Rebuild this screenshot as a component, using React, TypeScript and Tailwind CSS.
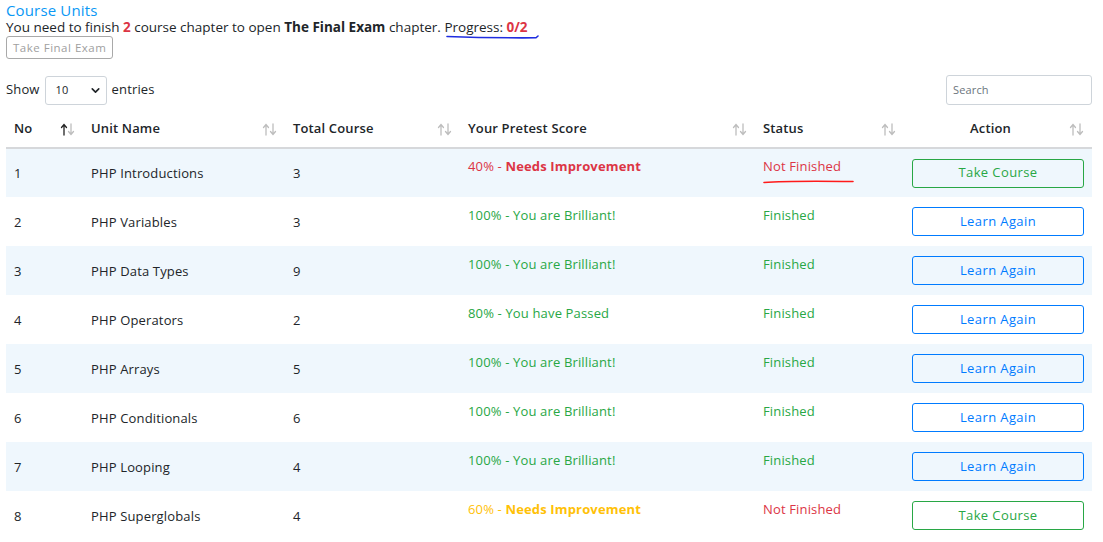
import { ChevronDown } from 'lucide-react'

type Unit = {
  no: number
  name: string
  total: number
  score: number
  finished: boolean
}

const units: Unit[] = [
  { no: 1, name: 'PHP Introductions', total: 3, score: 40, finished: false },
  { no: 2, name: 'PHP Variables', total: 3, score: 100, finished: true },
  { no: 3, name: 'PHP Data Types', total: 9, score: 100, finished: true },
  { no: 4, name: 'PHP Operators', total: 2, score: 80, finished: true },
  { no: 5, name: 'PHP Arrays', total: 5, score: 100, finished: true },
  { no: 6, name: 'PHP Conditionals', total: 6, score: 100, finished: true },
  { no: 7, name: 'PHP Looping', total: 4, score: 100, finished: true },
  { no: 8, name: 'PHP Superglobals', total: 4, score: 60, finished: false },
]

function SortIcon({ active }: { active?: boolean }) {
  return (
    <svg width="15" height="13" viewBox="0 0 15 13" className="shrink-0">
      <g stroke={active ? '#222' : '#bdbdbd'} strokeWidth="1.3" fill="none" strokeLinecap="round">
        <path d="M4 12 V2 M1.5 4.5 L4 1.5 L6.5 4.5" />
      </g>
      <g stroke="#bdbdbd" strokeWidth="1.3" fill="none" strokeLinecap="round">
        <path d="M11 1 V11 M8.5 8.5 L11 11.5 L13.5 8.5" />
      </g>
    </svg>
  )
}

function Score({ score }: { score: number }) {
  if (score === 100) return <span className="text-[#28a745]">100% - You are Brilliant!</span>
  if (score >= 80) return <span className="text-[#28a745]">{score}% - You have Passed</span>
  const color = score >= 50 ? 'text-[#ffc107]' : 'text-[#dc3545]'
  return (
    <span className={color}>
      {score}% - <b className="font-bold">Needs Improvement</b>
    </span>
  )
}

const headers = [
  { label: 'No', w: 'w-[77px]', active: true },
  { label: 'Unit Name', w: 'w-[202px]' },
  { label: 'Total Course', w: 'w-[175px]' },
  { label: 'Your Pretest Score', w: 'w-[295px]' },
  { label: 'Status', w: 'w-[149px]' },
  { label: 'Action', w: 'w-[188px]', center: true },
]

export default function App() {
  return (
    <main className="min-h-screen bg-white px-[6px] text-[#212529] font-['Open_Sans',sans-serif] tracking-[0.15px]">
      <div className="w-[1086px]">
        <h1 className="pt-[1px] text-[15px] leading-[18px] text-[#0a98f5]">Course Units</h1>
        <p className="relative h-[17px] text-[13.5px] leading-[17px] tracking-normal">
          You need to finish <b className="text-[#dc3545]">2</b> course chapter to open <b>The Final Exam</b> chapter.{' '}
          Progress: <b className="text-[#dc3545]">0/2</b>
          <svg className="absolute left-[439px] top-[15px]" width="96" height="6" viewBox="0 0 96 6">
            <path d="M2 2.5 C 30 3.5, 60 4, 91 3.8 L 93 2" stroke="#1f2de0" strokeWidth="1.6" fill="none" strokeLinecap="round" />
          </svg>
        </p>
        <button
          disabled
          className="block h-[23px] rounded-[3px] border border-[#a9a9a9] px-[6px] text-[11.5px] tracking-[0.5px] text-[#a0a0a0]"
        >
          Take Final Exam
        </button>

        <div className="mt-[16px] flex items-center justify-between">
          <label className="flex items-center gap-[5px] text-[13px]">
            Show
            <span className="flex h-[29px] w-[62px] items-center justify-between rounded-[3px] border border-[#ced4da] pl-[10px] pr-[4px] text-[11px]">
              10
              <ChevronDown size={13} strokeWidth={3} />
            </span>
            entries
          </label>
          <div className="flex h-[30px] w-[146px] items-center rounded-[3px] border border-[#ced4da] px-[6px] text-[11px] text-[#6c757d]">
            Search
          </div>
        </div>

        <table className="mt-[10px] w-[1086px] border-collapse text-[13px]">
          <thead>
            <tr className="border-b-2 border-[#d6d8db]">
              {headers.map((h) => (
                <th key={h.label} className={`${h.w} h-[33px] px-[8px] pb-[4px] font-semibold`}>
                  <div className="flex items-center justify-between">
                    <span className={h.center ? 'flex-1 text-center' : ''}>{h.label}</span>
                    <SortIcon active={h.active} />
                  </div>
                </th>
              ))}
            </tr>
          </thead>
          <tbody>
            {units.map((u) => (
              <tr key={u.no} className={`h-[49px] ${u.no % 2 === 1 ? 'bg-[#eff7fd]' : 'bg-white'}`}>
                <td className="px-[8px] pt-[2px]">{u.no}</td>
                <td className="px-[8px] pt-[2px]">{u.name}</td>
                <td className="px-[8px] pt-[2px]">{u.total}</td>
                <td className="px-[8px]">
                  <div className="mb-[12px]">
                    <Score score={u.score} />
                  </div>
                </td>
                <td className="relative px-[8px]">
                  <div className={`mb-[12px] ${u.finished ? 'text-[#28a745]' : 'text-[#dc3545]'}`}>
                    {u.finished ? 'Finished' : 'Not Finished'}
                  </div>
                  {u.no === 1 && (
                    <svg className="absolute left-[8px] top-[30px]" width="92" height="5" viewBox="0 0 92 5">
                      <path d="M1 3.5 C 20 2, 50 2, 90 2.5" stroke="#ff1a1a" strokeWidth="1.6" fill="none" strokeLinecap="round" />
                    </svg>
                  )}
                </td>
                <td className="px-[8px]">
                  <button
                    className={`h-[29px] w-[172px] rounded-[3px] border text-[13px] tracking-[0.4px] ${
                      u.finished ? 'border-[#007bff] text-[#007bff]' : 'border-[#28a745] text-[#28a745]'
                    }`}
                  >
                    {u.finished ? 'Learn Again' : 'Take Course'}
                  </button>
                </td>
              </tr>
            ))}
          </tbody>
        </table>
      </div>
    </main>
  )
}
